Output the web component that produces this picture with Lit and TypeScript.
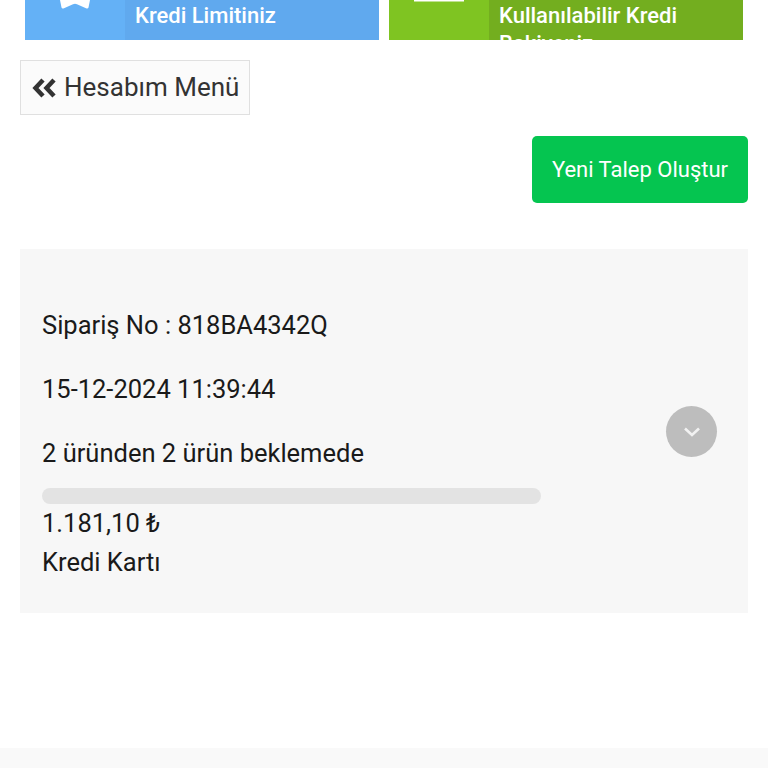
import { LitElement, html, css } from "lit";
import { customElement } from "lit/decorators.js";

@customElement("app-root")
export class AppRoot extends LitElement {
  static styles = css`
    :host { display: block; width: 768px; height: 768px; overflow: hidden; background: #fff; font-family: Roboto, "Liberation Sans", sans-serif; color: #212121; }
    .page { display: flex; flex-direction: column; height: 768px; }
    .stats { display: flex; gap: 10px; padding: 0 25px; height: 40px; flex: none; }
    .stat { flex: 1; display: flex; overflow: hidden; color: #fff; font-size: 22px; font-weight: 500; line-height: 28px; }
    .blue { background: #60a9ee; }
    .blue .tile { background: #64b1f6; }
    .green { background: #73ae1f; }
    .green .tile { background: #7fc422; }
    .tile { width: 100px; flex: none; display: flex; justify-content: center; align-items: flex-start; }
    .label { padding: 2px 10px 0; flex: 1; }
    .tile svg { display: block; }
    .back-row { padding: 20px 20px 0; display: flex; }
    .back { height: 55px; box-sizing: border-box; width: 230px; display: flex; align-items: center; gap: 7px; padding-left: 11px; border: 1px solid #e0e0e0; background: #fbfbfb; color: #333; font-size: 26px; white-space: nowrap; }
    .back span { margin-top: -2px; }
    .new-row { display: flex; justify-content: flex-end; padding: 21px 20px 0; }
    .new { width: 216px; height: 67px; display: flex; align-items: center; justify-content: center; background: #05c550; color: #fff; border-radius: 5px; font-size: 22px; }
    .order { margin: 46px 20px 0; height: 364px; box-sizing: border-box; background: #f7f7f7; padding: 44px 22px 0; position: relative; font-size: 25.5px; line-height: 64px; color: #1a1a1a; }
    .order p { margin: 0; white-space: nowrap; }
    .bar { width: 499px; height: 16px; border-radius: 8px; background: #e3e3e3; margin-top: 3px; }
    .pay { line-height: 37.5px; margin-top: 1px; }
    .toggle { position: absolute; left: 646px; top: 157px; width: 51px; height: 51px; border-radius: 50%; background: #bdbdbd; display: flex; align-items: center; justify-content: center; }
    .footer { margin-top: auto; height: 20px; background: #f9f9f9; }
  `;

  render() {
    return html`<div class="page">
      <div class="stats">
        <div class="stat blue">
          <div class="tile"><svg width="30" height="9" viewBox="0 0 30 9"><path d="M0 0H30L28.5 7.5Q28 9 26 8.2L17 4.2Q15 3.4 13 4.2L4 8.2Q2 9 1.5 7.5Z" fill="#fff"/></svg></div>
          <div class="label">Kredi Limitiniz</div>
        </div>
        <div class="stat green">
          <div class="tile"><svg width="50" height="2" viewBox="0 0 50 2"><rect width="50" height="1.5" fill="#fff"/></svg></div>
          <div class="label">Kullanılabilir Kredi Bakiyeniz</div>
        </div>
      </div>
      <div class="back-row">
        <div class="back">
          <svg width="25" height="20" viewBox="0 0 25 20"><path d="M11 2L3.5 10L11 18M22 2L14.5 10L22 18" fill="none" stroke="#333" stroke-width="4.5"/></svg>
          <span>Hesabım Menü</span>
        </div>
      </div>
      <div class="new-row"><div class="new">Yeni Talep Oluştur</div></div>
      <div class="order">
        <p>Sipariş No : 818BA4342Q</p>
        <p>15-12-2024 11:39:44</p>
        <p>2 üründen 2 ürün beklemede</p>
        <div class="bar"></div>
        <div class="pay">1.181,10 ₺</div>
        <div class="pay">Kredi Kartı</div>
        <div class="toggle"><svg width="20" height="12" viewBox="0 0 20 12"><path d="M3 2.5L10 9L17 2.5" fill="none" stroke="#f2f2f2" stroke-width="2.6"/></svg></div>
      </div>
      <div class="footer"></div>
    </div>`;
  }
}
